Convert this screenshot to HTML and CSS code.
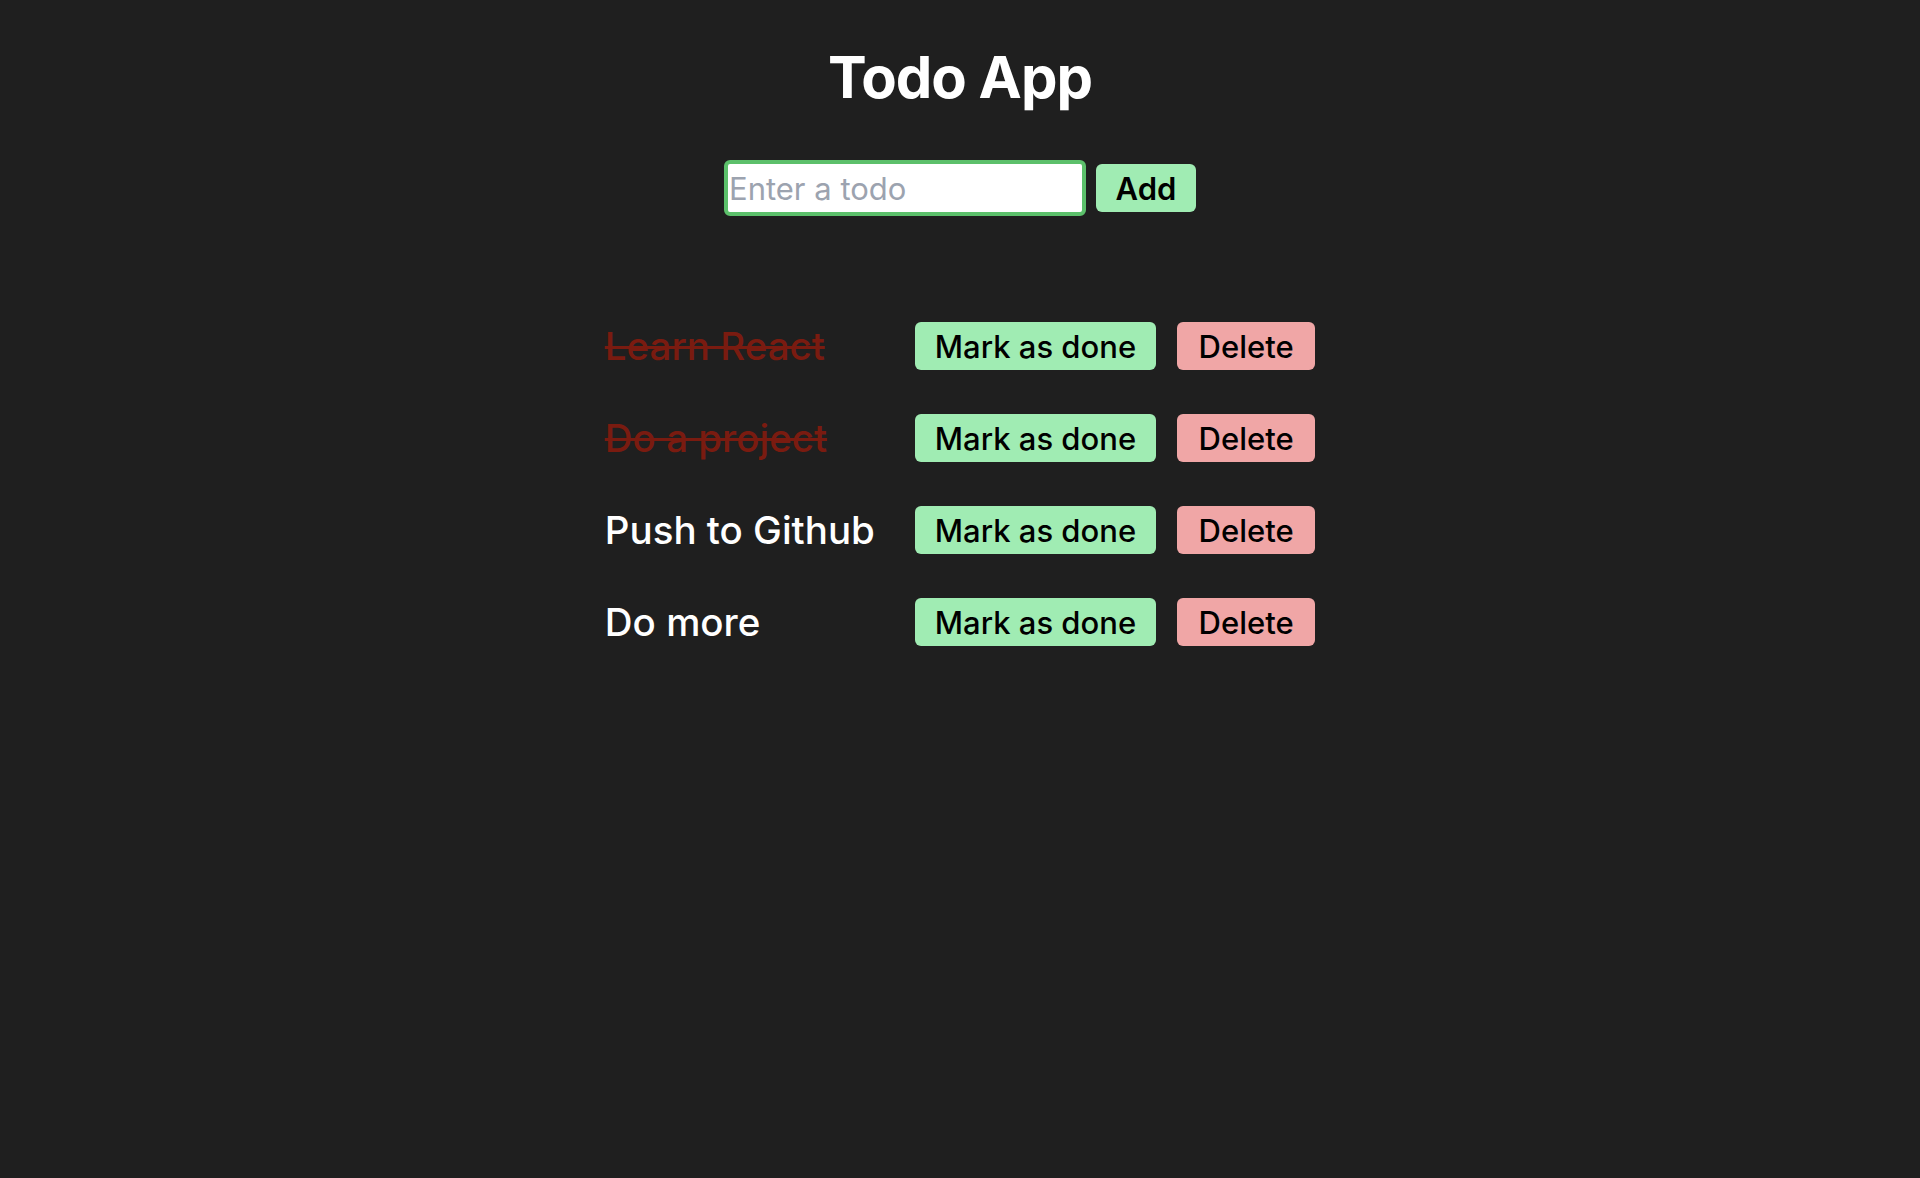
FILE: index.html
```html
<!DOCTYPE html>
<html lang="en">
<head>
<meta charset="utf-8">
<title>Todo App</title>
<link rel="stylesheet" href="styles.css">
</head>
<body>
<main class="app">
  <h1 class="title">Todo App</h1>
  <form class="add-form">
    <input class="todo-input" type="text" placeholder="Enter a todo">
    <button class="btn btn-add" type="button">Add</button>
  </form>
  <ul class="todo-list">
    <li class="todo-item">
      <span class="todo-text done">Learn React</span>
      <button class="btn btn-done" type="button">Mark as done</button>
      <button class="btn btn-delete" type="button">Delete</button>
    </li>
    <li class="todo-item">
      <span class="todo-text done">Do a project</span>
      <button class="btn btn-done" type="button">Mark as done</button>
      <button class="btn btn-delete" type="button">Delete</button>
    </li>
    <li class="todo-item">
      <span class="todo-text">Push to Github</span>
      <button class="btn btn-done" type="button">Mark as done</button>
      <button class="btn btn-delete" type="button">Delete</button>
    </li>
    <li class="todo-item">
      <span class="todo-text">Do more</span>
      <button class="btn btn-done" type="button">Mark as done</button>
      <button class="btn btn-delete" type="button">Delete</button>
    </li>
  </ul>
</main>
</body>
</html>
```

FILE: styles.css
```css
* { box-sizing: border-box; }

html, body {
  margin: 0;
  padding: 0;
  background: #1f1f1f;
  min-height: 100%;
}

body {
  font-family: Inter, "Noto Sans", "Liberation Sans", sans-serif;
  color: #ffffff;
  min-height: 1178px;
}

.app {
  display: flex;
  flex-direction: column;
  align-items: center;
  padding-top: 48px;
}

.title {
  margin: 0;
  font-size: 58px;
  line-height: 1;
  font-weight: 700;
  letter-spacing: -1px;
}

.add-form {
  display: flex;
  align-items: center;
  gap: 10px;
  margin: 54px 0 0;
}

.todo-input {
  width: 362px;
  height: 56px;
  border: 4px solid #5cc06b;
  border-radius: 6px;
  padding: 0 1px;
  font-family: inherit;
  font-size: 31px;
  font-weight: 400;
  color: #111;
  background: #ffffff;
  outline: none;
}

.todo-input::placeholder {
  color: #9ca3af;
}

.btn {
  height: 48px;
  border: none;
  border-radius: 6px;
  padding: 0 20px;
  font-family: inherit;
  font-size: 31px;
  font-weight: 500;
  color: #000;
  cursor: pointer;
  line-height: 1;
}

.btn-add {
  width: 100px;
  padding: 0;
  font-weight: 600;
  background: #a0ecb3;
}

.btn-done {
  background: #a0ecb3;
}

.btn-delete {
  padding: 0 21.5px;
  background: #f0a6a6;
}

.todo-list {
  list-style: none;
  margin: 106px 0 0;
  padding: 0;
  display: flex;
  flex-direction: column;
  gap: 44px;
}

.todo-item {
  display: flex;
  align-items: center;
  gap: 21px;
}

.todo-text {
  width: 289px;
  font-size: 38.5px;
  font-weight: 500;
  line-height: 48px;
  white-space: nowrap;
}

.todo-text.done {
  color: #7a1b10;
  text-decoration: line-through;
  text-decoration-thickness: 3px;
}
```
